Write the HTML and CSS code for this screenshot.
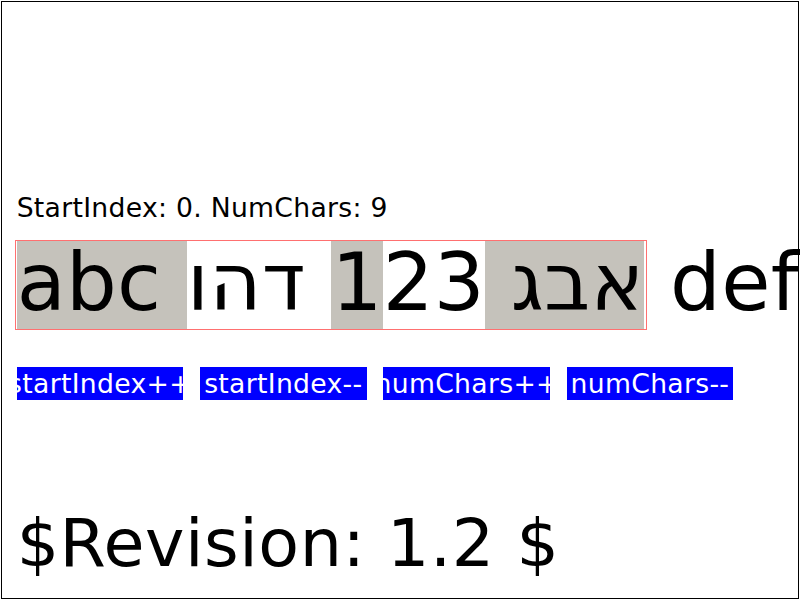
FILE: index.html
```
<!DOCTYPE html>
<html>
<head>
<meta charset="utf-8">
<link rel="stylesheet" href="styles.css">
</head>
<body>
<div class="frame">
  <div class="status">StartIndex: 0. NumChars: 9</div>
  <div class="bidi"><span class="sel">abc אבג 1</span>23 דהו def<div class="extent"></div></div>
  <div class="buttons">
    <div class="btn">startIndex++</div>
    <div class="btn">startIndex--</div>
    <div class="btn">numChars++</div>
    <div class="btn">numChars--</div>
  </div>
  <div class="revision">$Revision: 1.2 $</div>
</div>
</body>
</html>
```
FILE: styles.css
```
html, body {
  margin: 0;
  padding: 0;
  background: #fff;
}
body {
  width: 800px;
  height: 600px;
  overflow: hidden;
  font-family: "DejaVu Sans", sans-serif;
  color: #000;
}
.frame {
  box-sizing: border-box;
  margin: 1px;
  width: 798px;
  height: 598px;
  border: 1px solid #000;
  padding-left: 14.67px;
}
.status {
  margin-top: 189.9px;
  font-size: 26.67px;
  line-height: 1.164;
  letter-spacing: 0.28px;
  white-space: nowrap;
}
.bidi {
  position: relative;
  margin-top: 12.8px;
  font-size: 80px;
  line-height: 1.164;
  letter-spacing: 0.3px;
  white-space: nowrap;
  direction: ltr;
}
.sel {
  background: linear-gradient(to bottom, transparent 4.2px, #c5c2bb 4.2px);
}
.extent {
  position: absolute;
  left: -2px;
  top: 4.2px;
  width: 632px;
  height: 90.5px;
  box-sizing: border-box;
  border: 1px solid #ff7070;
}
.buttons {
  display: flex;
  gap: 16.67px;
  margin-top: 37.8px;
}
.btn {
  flex: none;
  width: 166.67px;
  height: 33.33px;
  background: #0000ff;
  color: #fff;
  font-size: 26.67px;
  line-height: 1.164;
  letter-spacing: 0.3px;
  display: flex;
  align-items: center;
  justify-content: center;
  white-space: nowrap;
}
.revision {
  margin-top: 104.8px;
  font-size: 66.67px;
  line-height: 1.164;
  letter-spacing: 0.53px;
  white-space: nowrap;
}
```
